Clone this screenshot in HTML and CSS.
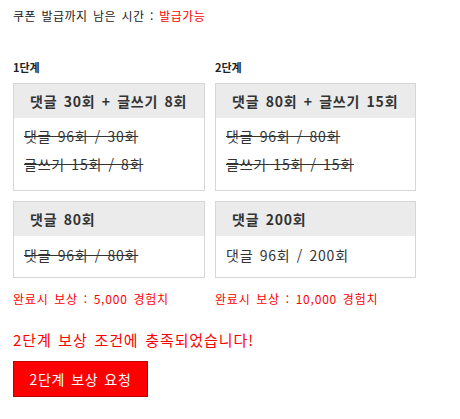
FILE: index.html
```html
<!DOCTYPE html>
<html lang="ko">
<head>
<meta charset="utf-8">
<link rel="stylesheet" href="styles.css">
</head>
<body>
<div class="top">쿠폰 발급까지 남은 시간 : <span class="red">발급가능</span></div>
<div class="stages">
  <div class="col col-1">
    <div class="label">1단계</div>
    <div class="box box-tall">
      <div class="box-head">댓글 30회 + 글쓰기 8회</div>
      <div class="box-body">
        <p class="row done">댓글 96회 / 30회</p>
        <p class="row done">글쓰기 15회 / 8회</p>
      </div>
    </div>
    <div class="box box-short">
      <div class="box-head">댓글 80회</div>
      <div class="box-body">
        <p class="row done">댓글 96회 / 80회</p>
      </div>
    </div>
    <div class="reward">완료시 보상 : 5,000 경험치</div>
  </div>
  <div class="col col-2">
    <div class="label">2단계</div>
    <div class="box box-tall">
      <div class="box-head">댓글 80회 + 글쓰기 15회</div>
      <div class="box-body">
        <p class="row done">댓글 96회 / 80회</p>
        <p class="row done">글쓰기 15회 / 15회</p>
      </div>
    </div>
    <div class="box box-short">
      <div class="box-head">댓글 200회</div>
      <div class="box-body">
        <p class="row">댓글 96회 / 200회</p>
      </div>
    </div>
    <div class="reward">완료시 보상 : 10,000 경험치</div>
  </div>
</div>
<div class="message">2단계 보상 조건에 충족되었습니다!</div>
<button class="request">2단계 보상 요청</button>
</body>
</html>
```

FILE: styles.css
```css
html, body {
  margin: 0;
  padding: 0;
  background: #fff;
}
body {
  padding: 8px 13px 0;
  font-family: "Noto Sans CJK KR", "DejaVu Sans", sans-serif;
  color: #333;
  word-spacing: 0.1em;
  letter-spacing: 0.05em;
}
.top {
  font-size: 12px;
  line-height: 16px;
  color: #222;
  letter-spacing: 0.04em;
}
.red {
  color: #ff0000;
}
.stages {
  display: flex;
  gap: 10px;
  margin-top: 36px;
}
.col {
  display: flex;
  flex-direction: column;
}
.col-1 { width: 192px; }
.col-2 { width: 201px; }
.label {
  font-size: 11px;
  line-height: 14px;
  font-weight: bold;
  color: #222;
  margin-bottom: 9px;
  letter-spacing: 0;
}
.box {
  border: 1px solid #d6d6d6;
  background: #fff;
}
.box-short {
  margin-top: 10px;
}
.box-head {
  height: 34px;
  line-height: 34px;
  background: #ebebeb;
  padding-left: 16px;
  font-size: 14px;
  font-weight: bold;
  color: #333;
  white-space: nowrap;
}
.box-body {
  padding: 4px 10px 12px;
}
.box-short .box-body {
  padding: 5px 10px 8px;
}
.row {
  margin: 0;
  font-size: 14px;
  line-height: 28px;
  color: #333;
  white-space: nowrap;
}
.done {
  text-decoration: line-through;
}
.reward {
  margin-top: 13px;
  font-size: 12px;
  line-height: 16px;
  color: #ff0000;
  white-space: nowrap;
}
.message {
  margin-top: 23px;
  font-size: 15px;
  line-height: 20px;
  color: #ff0000;
  letter-spacing: 0.06em;
}
.request {
  display: block;
  margin-top: 11px;
  width: 135px;
  height: 36px;
  background: #ff0000;
  border: 1px solid #c00000;
  color: #fff;
  font-family: "Noto Sans CJK KR", "DejaVu Sans", sans-serif;
  font-size: 14px;
  word-spacing: 0.1em;
  letter-spacing: 0.05em;
  padding: 0;
  cursor: pointer;
}
```
